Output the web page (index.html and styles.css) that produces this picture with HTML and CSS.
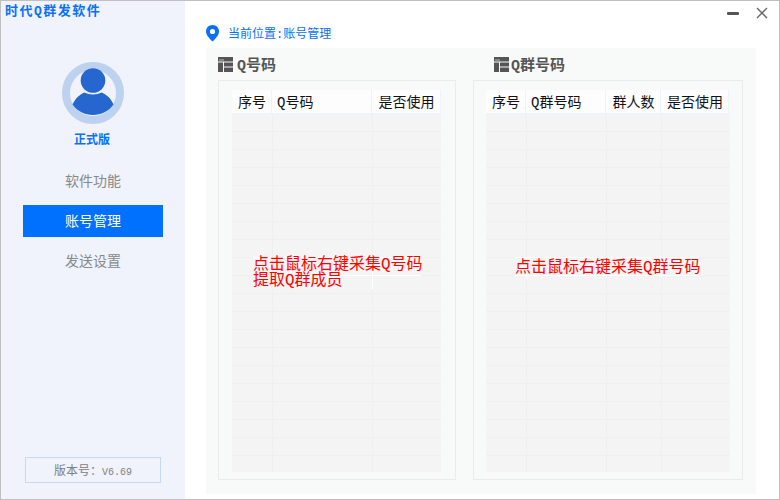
FILE: index.html
```html
<!DOCTYPE html>
<html lang="zh">
<head>
<meta charset="utf-8">
<title>时代Q群发软件</title>
<link rel="stylesheet" href="styles.css">
</head>
<body>
<div class="window">
  <aside class="sidebar">
    <div class="app-title">时代Q群发软件</div>
    <svg class="avatar" width="62" height="62" viewBox="0 0 62 62">
      <circle cx="31" cy="31" r="27" fill="none" stroke="#bdd2ee" stroke-width="8"/>
      <circle cx="31" cy="18.500" r="12.300" fill="#2566cf"/>
      <path d="M10.500 42.500C13.500 36 18 32.500 22.500 30.500C27 33 35 33 39.500 30.500C44 32.500 49 36 51.500 42.500C47 49 39 53 31 53C23 53 15 49 10.500 42.500Z" fill="#2566cf"/>
    </svg>
    <div class="edition">正式版</div>
    <nav class="nav">
      <div class="nav-item">软件功能</div>
      <div class="nav-item active">账号管理</div>
      <div class="nav-item">发送设置</div>
    </nav>
    <div class="version">版本号：<span class="version-num">V6.69</span></div>
  </aside>
  <main class="main">
    <div class="controls">
      <span class="minimize"></span>
      <svg class="close" width="12" height="12" viewBox="0 0 12 12"><path d="M1 1L11 11M11 1L1 11" stroke="#666" stroke-width="1.400" fill="none"/></svg>
    </div>
    <div class="crumb">
      <svg width="13" height="17" viewBox="0 0 13 17"><path fill-rule="evenodd" d="M6.500 0C10.200 0 13 2.800 13 6.400C13 10 9.500 13.500 6.500 16.500C3.500 13.500 0 10 0 6.400C0 2.800 2.800 0 6.500 0ZM6.500 3.900A2.600 2.600 0 1 0 6.500 9.100A2.600 2.600 0 1 0 6.500 3.900Z" fill="#0a70f5"/></svg>
      <span>当前位置:账号管理</span>
    </div>
    <div class="panel">
      <section class="pane pane-left">
        <h2 class="pane-title">
          <svg width="15" height="15" viewBox="0 0 15 15" fill="#555"><rect width="15" height="4.500"/><rect x="0" y="5.500" width="5" height="9.500"/><rect x="6" y="5.500" width="9" height="4"/><rect x="6" y="10.500" width="9" height="4.500"/><rect x="1" y="2.500" width="5" height="1" fill="#bbb"/></svg>
          <span>Q号码</span>
        </h2>
        <div class="group">
          <div class="grid">
            <div class="col w40"><div class="head">序号</div><div class="rows"></div></div>
            <div class="col w100"><div class="head left">Q号码</div><div class="rows"></div></div>
            <div class="col w69"><div class="head">是否使用</div><div class="rows"></div></div>
          </div>
          <div class="hint hint-left">点击鼠标右键采集Q号码<br>提取Q群成员</div>
        </div>
      </section>
      <section class="pane pane-right">
        <h2 class="pane-title tight">
          <svg width="15" height="15" viewBox="0 0 15 15" fill="#555"><rect width="15" height="4.500"/><rect x="0" y="5.500" width="5" height="9.500"/><rect x="6" y="5.500" width="9" height="4"/><rect x="6" y="10.500" width="9" height="4.500"/><rect x="1" y="2.500" width="5" height="1" fill="#bbb"/></svg>
          <span>Q群号码</span>
        </h2>
        <div class="group">
          <div class="grid">
            <div class="col w40"><div class="head">序号</div><div class="rows"></div></div>
            <div class="col w80"><div class="head left">Q群号码</div><div class="rows"></div></div>
            <div class="col w55"><div class="head">群人数</div><div class="rows"></div></div>
            <div class="col w69"><div class="head gap">是否使用</div><div class="rows"></div></div>
          </div>
          <div class="hint hint-right">点击鼠标右键采集Q群号码</div>
        </div>
      </section>
    </div>
  </main>
</div>
</body>
</html>
```
FILE: styles.css
```css
* { box-sizing: border-box; }
html, body { margin: 0; padding: 0; }
body {
  width: 780px;
  height: 500px;
  overflow: hidden;
  font-family: "Liberation Mono", "Noto Sans CJK SC", monospace;
  background: #fff;
}
.window {
  width: 780px;
  height: 500px;
  border: 1px solid #c0c0c0;
  display: flex;
  background: #fff;
}
.sidebar {
  width: 184px;
  background: #f0f3fb;
  display: flex;
  flex-direction: column;
  align-items: center;
  flex: none;
}
.app-title {
  align-self: flex-start;
  margin: 0 0 0 4px;
  height: 18px;
  line-height: 22px;
  font-size: 13px;
  font-weight: 700;
  color: #0a70f5;
  letter-spacing: 1.500px;
  white-space: nowrap;
}
.avatar { margin-top: 43px; display: block; }
.edition {
  margin: 8px 2px 0 0;
  height: 18px;
  line-height: 18px;
  font-size: 12px;
  font-weight: 700;
  color: #0a70f5;
}
.nav {
  margin-top: 15px;
  display: flex;
  flex-direction: column;
  gap: 8px;
}
.nav-item {
  width: 140px;
  height: 32px;
  line-height: 35px;
  text-align: center;
  font-size: 14px;
  color: #888;
}
.nav-item.active { background: #0070ff; color: #fff; }
.version {
  margin-top: auto;
  margin-bottom: 16px;
  width: 136px;
  height: 26px;
  line-height: 28px;
  border: 1px solid #c8d8f0;
  text-align: center;
  font-size: 12px;
  color: #808080;
}
.version-num { font-size: 10px; }
.main {
  flex: 1;
  display: flex;
  flex-direction: column;
  min-width: 0;
}
.controls {
  height: 22px;
  display: flex;
  align-items: flex-start;
  justify-content: flex-end;
  padding: 6px 11px 0 0;
  gap: 17px;
}
.minimize {
  width: 12px;
  height: 3px;
  margin-top: 5px;
  background: #555;
  border-radius: 1px;
}
.close { display: block; }
.crumb {
  margin-left: 21px;
  height: 25px;
  display: flex;
  align-items: flex-start;
  gap: 9px;
  font-size: 12px;
  line-height: 24px;
  color: #0a70f5;
}
.crumb svg { margin-top: 2px; }
.panel {
  margin-left: 21px;
  width: 550px;
  height: 446px;
  background: #f8fafa;
  display: flex;
  padding: 0 13px 14px 12px;
}
.pane { display: flex; flex-direction: column; }
.pane-left { width: 238px; margin-right: 17px; }
.pane-right { width: 270px; }
.pane-title {
  margin: 0;
  height: 32px;
  padding-top: 9px;
  display: flex;
  align-items: flex-start;
  gap: 4px;
  font-size: 15px;
  line-height: 20px;
  font-weight: 700;
  color: #555;
}
.pane-title.tight { gap: 2px; margin-left: 21px; }
.group {
  position: relative;
  flex: 1;
  border: 1px solid #e8ecec;
  padding: 9px 14px 7px 13px;
}
.pane-right .group { padding-right: 12px; padding-left: 12px; }
.grid {
  height: 100%;
  display: flex;
}
.col {
  display: flex;
  flex-direction: column;
  flex: none;
}
.w40 { width: 40px; }
.w55 { width: 55px; }
.w69 { width: 69px; }
.w80 { width: 80px; }
.w100 { width: 100px; }
.head {
  height: 24px;
  line-height: 27px;
  padding-left: 1px;
  background: #fdfdfe;
  border-right: 1px solid #eef2f9;
  border-bottom: 1px solid #eef2f9;
  text-align: center;
  font-size: 14px;
  color: #111;
}
.head.left { text-align: left; padding-left: 5px; }
.head.gap { margin-right: 1px; }
.rows {
  flex: 1;
  background: repeating-linear-gradient(#f4f4f4 0, #f4f4f4 17px, #efefef 17px, #efefef 18px);
}
.col + .col .rows { border-left: 1px solid #efefef; }
.hint {
  position: absolute;
  padding-top: 3px;
  color: #f00;
  font-size: 16px;
  line-height: 16px;
  white-space: nowrap;
  background-repeat: no-repeat;
  background-image:
    linear-gradient(#fff, #fff), linear-gradient(#fff, #fff),
    linear-gradient(#fff, #fff), linear-gradient(#fff, #fff),
    linear-gradient(#fff, #fff);
}
.hint-left {
  left: 34px;
  top: 173px;
  width: 168px;
  height: 35px;
  background-size: 100% 1px, 100% 1px, 1px 100%, 0 0, 0 0;
  background-position: 0 3px, 0 21px, 119px 3px, 0 0, 0 0;
}
.hint-right {
  left: 41px;
  top: 176px;
  width: 183px;
  height: 21px;
  background-size: 100% 1px, 100% 1px, 1px 100%, 1px 100%, 1px 100%;
  background-position: 0 0, 0 18px, 11px 0, 91px 0, 146px 0;
}
```
